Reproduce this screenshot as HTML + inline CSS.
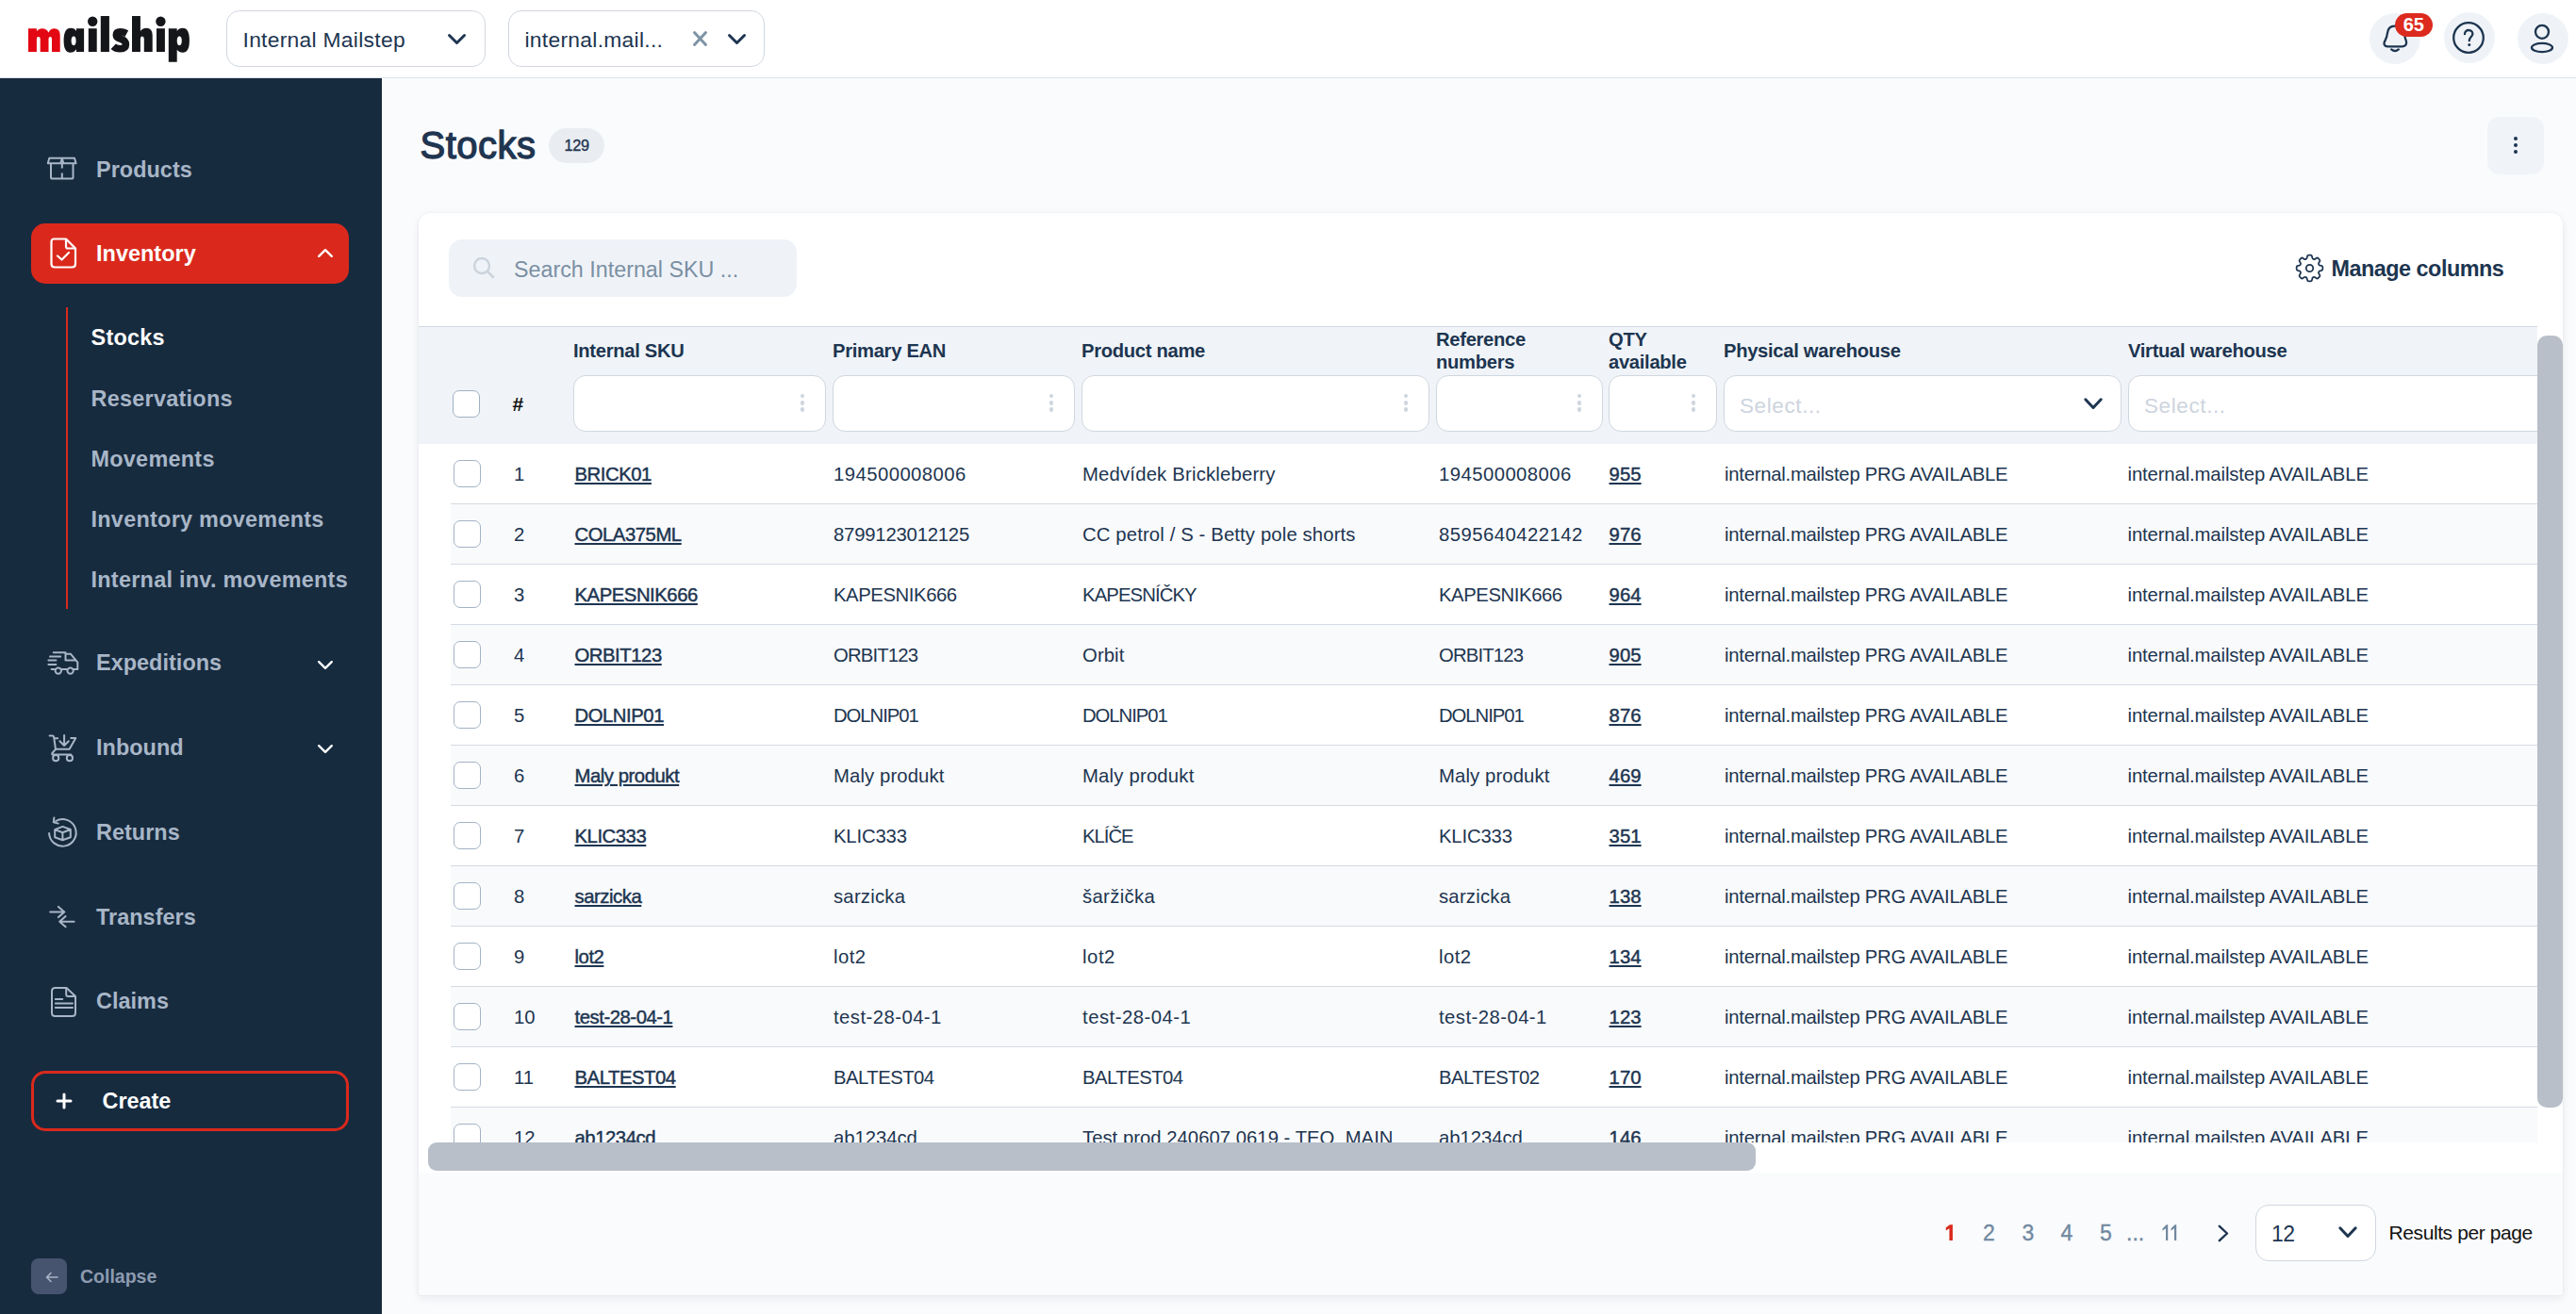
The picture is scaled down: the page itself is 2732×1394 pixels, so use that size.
<!DOCTYPE html>
<html><head><meta charset="utf-8"><style>
*{box-sizing:border-box;margin:0;padding:0}
html,body{width:2732px;height:1394px;overflow:hidden;background:#fafbfd;font-family:"Liberation Sans", sans-serif}
.t{position:absolute;white-space:nowrap;line-height:1;font-family:"Liberation Sans", sans-serif}
.a{position:absolute}
svg{position:absolute;overflow:visible}
</style></head><body>
<div class="a" style="left:0;top:0;width:2732px;height:83px;background:#fff"></div>
<div class="a" style="left:0;top:82px;width:2732px;height:1px;background:#dde3ea"></div>
<svg style="left:0;top:0" width="220" height="80" viewBox="0 0 220 80"><path fill="#e30613" d="M30 54.9 V30.2 H38.9 V33.2 Q41 30.2 44.8 30.2 Q49.2 30.2 51.4 34.4 Q53.8 30.2 57.4 30.2 Q63.7 30.2 63.7 37.2 V54.9 H55 V41.2 Q55 38.9 53.3 38.9 Q51.5 38.9 51.5 41.2 V54.9 H42.7 V41.2 Q42.7 38.9 40.8 38.9 Q38.9 38.9 38.9 41.2 V54.9 Z"/><path fill="#151619" fill-rule="evenodd" d="M81 30.2 H89.1 V55 H81 V52.3 Q78.5 55.8 74.5 55.8 Q67.6 55.8 67.6 43 Q67.6 29.8 75 29.8 Q79 29.8 81 33 Z M78.2 38.4 Q75.6 38.4 75.6 43.3 Q75.6 48.2 78.2 48.2 Q80.6 48.2 80.6 43.3 Q80.6 38.4 78.2 38.4 Z"/><rect x="93.8" y="30.2" width="8.9" height="24.8" fill="#151619"/><circle cx="98.2" cy="22.8" r="5.2" fill="#151619"/><rect x="106.8" y="17" width="9.1" height="38" fill="#151619"/><path fill="none" stroke="#151619" stroke-width="7.6" d="M134.3 35.6 Q131 33.8 127.6 33.8 Q123.3 33.8 123.3 37.2 Q123.3 39.9 128.2 41.3 Q133.4 42.8 133.4 47.1 Q133.4 51.7 127.4 51.7 Q122.8 51.7 120.2 49.2"/><path fill="#151619" d="M140 17 H148.9 V33 Q151.5 29.8 155.2 29.8 Q161.7 29.8 161.7 37.5 V55 H152.8 V41.2 Q152.8 38.6 150.8 38.6 Q148.9 38.6 148.9 41.2 V55 H140 Z"/><rect x="166" y="30.2" width="8.9" height="24.8" fill="#151619"/><circle cx="170.4" cy="22.8" r="5.2" fill="#151619"/><path fill="#151619" fill-rule="evenodd" d="M178.8 30.2 H187.7 V33 Q190 29.8 193.8 29.8 Q200.9 29.8 200.9 43 Q200.9 55.8 193.8 55.8 Q190 55.8 187.7 52.8 V65.7 H178.8 Z M190.2 38.4 Q187.7 38.4 187.7 43.3 Q187.7 48.2 190.2 48.2 Q192.8 48.2 192.8 43.3 Q192.8 38.4 190.2 38.4 Z"/></svg>
<div class="a" style="left:240px;top:11px;width:275px;height:60px;border:1px solid #d1d7df;border-radius:14px;background:#fff"></div>
<div class="t" style="left:257.5px;top:30.7px;font-size:22.8px;color:#1d3550;font-weight:400;letter-spacing:0.3px;">Internal Mailstep</div>
<svg style="left:475px;top:36px" width="19" height="11" viewBox="0 0 19 11"><path d="M1.5 1.5 L9.5 9.5 L17.5 1.5" fill="none" stroke="#1d3550" stroke-width="3" stroke-linecap="round" stroke-linejoin="round"/></svg>
<div class="a" style="left:539px;top:11px;width:272px;height:60px;border:1px solid #d1d7df;border-radius:14px;background:#fff"></div>
<div class="t" style="left:556.5px;top:30.7px;font-size:22.8px;color:#1d3550;font-weight:400;letter-spacing:0.3px;">internal.mail...</div>
<svg style="left:735px;top:33px" width="15" height="16" viewBox="0 0 15 16"><path d="M1.5 1.5 L13.5 14.5 M13.5 1.5 L1.5 14.5" fill="none" stroke="#7f93a6" stroke-width="3" stroke-linecap="round"/></svg>
<svg style="left:771.5px;top:36px" width="19" height="11" viewBox="0 0 19 11"><path d="M1.5 1.5 L9.5 9.5 L17.5 1.5" fill="none" stroke="#1d3550" stroke-width="3" stroke-linecap="round" stroke-linejoin="round"/></svg>
<div class="a" style="left:2513px;top:14px;width:54px;height:54px;border-radius:50%;background:#eff3f7"></div>
<div class="a" style="left:2591.5px;top:13px;width:54px;height:54px;border-radius:50%;background:#eff3f7"></div>
<div class="a" style="left:2670px;top:14px;width:54px;height:54px;border-radius:50%;background:#eff3f7"></div>
<svg style="left:2526px;top:25px" width="30" height="34" viewBox="0 0 30 34"><path d="M13.5 2.6 C8.6 2.6 6.6 6 6.1 9.6 C5.6 13.2 5 15.4 3.4 18.4 C1.8 21.4 2.2 24.2 6.4 24.3 H21.8 C25.6 24.2 26.4 21.8 26 19.2 C25.6 16.8 24.4 15.4 24.2 12 C23.8 6.2 19.6 2.6 13.5 2.6 Z" fill="none" stroke="#1d3550" stroke-width="2.3" stroke-linejoin="round"/><path d="M10.2 27.4 Q14 30.6 17.8 27.4" fill="none" stroke="#1d3550" stroke-width="2.3" stroke-linecap="round"/></svg>
<div class="a" style="left:2540px;top:14px;width:40px;height:25px;border-radius:13px;background:#dc2a1e"></div>
<div class="t" style="left:2548.8px;top:16.0px;font-size:20px;color:#fff;font-weight:700;letter-spacing:-0.2px;">65</div>
<svg style="left:2601px;top:23px" width="34" height="34" viewBox="0 0 34 34"><circle cx="17" cy="17" r="15.8" fill="none" stroke="#1d3550" stroke-width="2.3"/><path d="M13 13.2 C13 10.5 15 9 17.2 9 C19.6 9 21.4 10.8 21.4 13 C21.4 15.8 17.8 16.5 17.8 20.2" fill="none" stroke="#1d3550" stroke-width="2.3" stroke-linecap="round"/><circle cx="17.8" cy="24.6" r="1.5" fill="#1d3550"/></svg>
<svg style="left:2681px;top:24px" width="30" height="34" viewBox="0 0 30 34"><circle cx="15" cy="9.8" r="7" fill="none" stroke="#1d3550" stroke-width="2.3"/><ellipse cx="15" cy="26.5" rx="11" ry="4.6" fill="none" stroke="#1d3550" stroke-width="2.3"/></svg>
<div class="a" style="left:0;top:83px;width:405px;height:1311px;background:#172b3f"></div>
<div class="a" style="left:33px;top:237px;width:337px;height:64px;border-radius:15px;background:#da291c"></div>
<div class="t" style="left:102.0px;top:168.6px;font-size:23.4px;color:#a8b6c7;font-weight:700;letter-spacing:0.05px;">Products</div>
<div class="t" style="left:102.0px;top:257.6px;font-size:23.4px;color:#fff;font-weight:700;letter-spacing:0.05px;">Inventory</div>
<div class="t" style="left:102.0px;top:692.2px;font-size:23.4px;color:#a8b6c7;font-weight:700;letter-spacing:0.05px;">Expeditions</div>
<div class="t" style="left:102.0px;top:782.0px;font-size:23.4px;color:#a8b6c7;font-weight:700;letter-spacing:0.05px;">Inbound</div>
<div class="t" style="left:102.0px;top:872.0px;font-size:23.4px;color:#a8b6c7;font-weight:700;letter-spacing:0.05px;">Returns</div>
<div class="t" style="left:102.0px;top:961.6px;font-size:23.4px;color:#a8b6c7;font-weight:700;letter-spacing:0.05px;">Transfers</div>
<div class="t" style="left:102.0px;top:1051.1px;font-size:23.4px;color:#a8b6c7;font-weight:700;letter-spacing:0.05px;">Claims</div>
<svg style="left:337px;top:263.5px" width="16" height="9" viewBox="0 0 16 9"><path d="M1.2 7.8 L8 1.2 L14.8 7.8" fill="none" stroke="#fff" stroke-width="2.4" stroke-linecap="round" stroke-linejoin="round"/></svg>
<svg style="left:337px;top:700.5px" width="16" height="9" viewBox="0 0 16 9"><path d="M1.2 1.2 L8 7.8 L14.8 1.2" fill="none" stroke="#fff" stroke-width="2.4" stroke-linecap="round" stroke-linejoin="round"/></svg>
<svg style="left:337px;top:790px" width="16" height="9" viewBox="0 0 16 9"><path d="M1.2 1.2 L8 7.8 L14.8 1.2" fill="none" stroke="#fff" stroke-width="2.4" stroke-linecap="round" stroke-linejoin="round"/></svg>
<div class="a" style="left:70px;top:326px;width:2px;height:320px;background:#da291c"></div>
<div class="t" style="left:96.5px;top:347.4px;font-size:23.4px;color:#fff;font-weight:700;letter-spacing:0.28px;">Stocks</div>
<div class="t" style="left:96.5px;top:411.9px;font-size:23.4px;color:#a8b6c7;font-weight:700;letter-spacing:0.28px;">Reservations</div>
<div class="t" style="left:96.5px;top:475.7px;font-size:23.4px;color:#a8b6c7;font-weight:700;letter-spacing:0.28px;">Movements</div>
<div class="t" style="left:96.5px;top:539.7px;font-size:23.4px;color:#a8b6c7;font-weight:700;letter-spacing:0.28px;">Inventory movements</div>
<div class="t" style="left:96.5px;top:603.7px;font-size:23.4px;color:#a8b6c7;font-weight:700;letter-spacing:0.28px;">Internal inv. movements</div>
<svg style="left:50px;top:166px" width="32" height="26" viewBox="0 0 32 26"><path d="M2.3 1.7 H29 L30.6 7.2 H0.8 Z" fill="none" stroke="#a8b6c7" stroke-width="2" stroke-linejoin="round"/><path d="M14.3 7.2 L15.8 1.9 L17.3 7.2" fill="none" stroke="#a8b6c7" stroke-width="2" stroke-linejoin="round"/><path d="M4 7.2 V22 Q4 23.6 5.6 23.6 H25.9 Q27.5 23.6 27.5 22 V7.2" fill="none" stroke="#a8b6c7" stroke-width="2"/><path d="M15.8 7.2 V12.4 M15.8 17.5 V23.6" stroke="#a8b6c7" stroke-width="2"/></svg>
<svg style="left:53px;top:252px" width="29" height="33" viewBox="0 0 29 33"><path d="M4 1.5 H17 L27 11.5 V28 Q27 31.5 23.5 31.5 H5 Q1.5 31.5 1.5 28 V5 Q1.5 1.5 4 1.5 Z" fill="none" stroke="#fff" stroke-width="2.2" stroke-linejoin="round"/><path d="M17 1.5 V9.5 Q17 11.5 19 11.5 H27" fill="none" stroke="#fff" stroke-width="2.2"/><path d="M8 19.5 L12.5 23.5 L20 16" fill="none" stroke="#fff" stroke-width="2.2" stroke-linecap="round" stroke-linejoin="round"/></svg>
<svg style="left:45px;top:685px" width="45" height="35" viewBox="0 0 45 35"><path d="M11.7 7.3 H24.5 V15.5 H35.6 M24.5 8.8 H30 L37.3 17.6 V25 H33 M20.6 25 H26 M9.6 25 H13" fill="none" stroke="#a8b6c7" stroke-width="2" stroke-linecap="round" stroke-linejoin="round"/><path d="M8 11.5 H19.2 M6.4 15.5 H14.4 M6.4 20 H14.4" stroke="#a8b6c7" stroke-width="2" stroke-linecap="round"/><circle cx="16.8" cy="26.6" r="3.2" fill="none" stroke="#a8b6c7" stroke-width="2"/><circle cx="29.6" cy="26.6" r="3.2" fill="none" stroke="#a8b6c7" stroke-width="2"/></svg>
<svg style="left:45px;top:772px" width="45" height="40" viewBox="0 0 45 40"><path d="M7.6 8.4 H10.6 Q11.8 8.4 12.1 9.8 L14 22.8 H28.6 L35.3 11 H30.2 M12.5 11.3 H16.2" fill="none" stroke="#a8b6c7" stroke-width="2" stroke-linecap="round" stroke-linejoin="round"/><path d="M14 22.8 L10.4 27 Q9.6 28.6 11.4 28.6 H30.2" fill="none" stroke="#a8b6c7" stroke-width="2" stroke-linecap="round" stroke-linejoin="round"/><path d="M23.1 7.9 V19 M18.4 14.2 L23.1 19 L27.8 14.2" fill="none" stroke="#a8b6c7" stroke-width="2" stroke-linecap="round" stroke-linejoin="round"/><circle cx="14.2" cy="32.2" r="3.1" fill="none" stroke="#a8b6c7" stroke-width="2"/><circle cx="28.9" cy="32.2" r="3.1" fill="none" stroke="#a8b6c7" stroke-width="2"/></svg>
<svg style="left:45px;top:860px" width="45" height="45" viewBox="0 0 45 45"><path d="M7.1 24 A14.3 14.3 0 1 0 14.2 11.0" fill="none" stroke="#a8b6c7" stroke-width="2" stroke-linecap="round"/><path d="M12.4 7.4 L11.8 12.3 L16.8 13.6" fill="none" stroke="#a8b6c7" stroke-width="2" stroke-linecap="round" stroke-linejoin="round"/><path d="M21.4 16.9 L29.8 20 V28.3 L21.4 31.3 L13.2 28.2 V20.1 Z M13.2 20.1 L21.4 23.2 L29.8 20 M21.4 23.2 V31.3" fill="none" stroke="#a8b6c7" stroke-width="2" stroke-linejoin="round"/></svg>
<svg style="left:45px;top:950px" width="45" height="45" viewBox="0 0 45 45"><path d="M8.2 17.5 H23.3 M16.9 11.9 L23.3 17.5 L16.9 23.1 M33.6 27.7 H18.2 M24.6 22.1 L18.2 27.7 L24.6 33.3" fill="none" stroke="#a8b6c7" stroke-width="2" stroke-linecap="round" stroke-linejoin="round"/></svg>
<svg style="left:53.5px;top:1046.5px" width="28" height="32" viewBox="0 0 28 32"><path d="M4.5 1 H16.5 L26 10 V27.5 Q26 31 22.5 31 H4.5 Q1 31 1 27.5 V4.5 Q1 1 4.5 1 Z" fill="none" stroke="#a8b6c7" stroke-width="2" stroke-linejoin="round"/><path d="M16.2 1 V8 Q16.2 10 18.2 10 H26" fill="none" stroke="#a8b6c7" stroke-width="2"/><path d="M4.8 13 H12.2 M4.8 17.5 H23 M4.8 21.9 H23" stroke="#a8b6c7" stroke-width="2" stroke-linecap="round"/></svg>
<div class="a" style="left:33px;top:1136px;width:337px;height:64px;border:3px solid #da291c;border-radius:15px"></div>
<svg style="left:60px;top:1160px" width="16" height="16" viewBox="0 0 16 16"><path d="M8 1 V15 M1 8 H15" stroke="#fff" stroke-width="3" stroke-linecap="round"/></svg>
<div class="t" style="left:108.5px;top:1157.2px;font-size:23.4px;color:#fff;font-weight:700;letter-spacing:0px;">Create</div>
<div class="a" style="left:33px;top:1335px;width:38px;height:38px;border-radius:8px;background:#465470"></div>
<svg style="left:47.5px;top:1348.5px" width="14" height="12" viewBox="0 0 14 12"><path d="M13 6 H1.5 M6 1.5 L1.5 6 L6 10.5" fill="none" stroke="#aab5c5" stroke-width="1.6" stroke-linecap="round" stroke-linejoin="round"/></svg>
<div class="t" style="left:85.0px;top:1344.5px;font-size:19.5px;color:#8d9bb0;font-weight:700;letter-spacing:0px;">Collapse</div>
<div class="t" style="left:445.5px;top:133.9px;font-size:40px;color:#1f3550;font-weight:400;letter-spacing:0.5px;-webkit-text-stroke:1.3px currentColor;">Stocks</div>
<div class="a" style="left:582px;top:136px;width:59px;height:37px;border-radius:19px;background:#e9edf2"></div>
<div class="t" style="left:598.5px;top:146.1px;font-size:16.3px;color:#1f3550;font-weight:400;letter-spacing:-0.3px;-webkit-text-stroke:0.35px currentColor;">129</div>
<div class="a" style="left:2638px;top:124px;width:60px;height:61px;border-radius:13px;background:#f0f3f8"></div>
<div class="a" style="left:2665.8px;top:145.10000000000002px;width:4.4px;height:4.4px;border-radius:50%;background:#1d3550"></div>
<div class="a" style="left:2665.8px;top:152.0px;width:4.4px;height:4.4px;border-radius:50%;background:#1d3550"></div>
<div class="a" style="left:2665.8px;top:159.0px;width:4.4px;height:4.4px;border-radius:50%;background:#1d3550"></div>
<div class="a" style="left:444px;top:226px;width:2274px;height:1148px;border-radius:13px 13px 2px 2px;background:#fafbfd;box-shadow:0 3px 10px rgba(15,23,42,0.08),0 0 3px rgba(15,23,42,0.05)"></div>
<div class="a" style="left:444px;top:226px;width:2274px;height:1018px;border-radius:13px 13px 0 0;background:#fff"></div>
<div class="a" style="left:476px;top:254px;width:369px;height:61px;border-radius:14px;background:#eff3f8"></div>
<svg style="left:501px;top:272px" width="24" height="24" viewBox="0 0 24 24"><circle cx="10" cy="10" r="8" fill="none" stroke="#cbd3dc" stroke-width="2.4"/><path d="M16 16 L22 22" stroke="#cbd3dc" stroke-width="2.6" stroke-linecap="round"/></svg>
<div class="t" style="left:545.0px;top:274.5px;font-size:23.3px;color:#7b8fa3;font-weight:400;letter-spacing:0px;">Search Internal SKU ...</div>
<svg style="left:2430.5px;top:265.5px" width="37" height="37" viewBox="0 0 24 24"><path fill="none" stroke="#1d3550" stroke-width="1.15" stroke-linejoin="round" d="M10.343 3.94c.09-.542.56-.94 1.11-.94h1.093c.55 0 1.02.398 1.11.94l.149.894c.07.424.384.764.78.93.398.164.855.142 1.205-.108l.737-.527a1.125 1.125 0 0 1 1.45.12l.773.774c.39.389.44 1.002.12 1.45l-.527.737c-.25.35-.272.806-.107 1.204.165.397.505.71.93.78l.893.15c.543.09.94.559.94 1.109v1.094c0 .55-.397 1.02-.94 1.11l-.894.149c-.424.07-.764.383-.929.78-.165.398-.143.854.107 1.204l.527.738c.32.447.269 1.06-.12 1.45l-.774.773a1.125 1.125 0 0 1-1.449.12l-.738-.527c-.35-.25-.806-.272-1.203-.107-.398.165-.71.505-.781.929l-.149.894c-.09.542-.56.94-1.11.94h-1.094c-.55 0-1.019-.398-1.11-.94l-.148-.894c-.071-.424-.384-.764-.781-.93-.398-.164-.854-.142-1.204.108l-.738.527c-.447.32-1.06.269-1.45-.12l-.773-.774a1.125 1.125 0 0 1-.12-1.45l.527-.737c.25-.35.272-.806.108-1.204-.165-.397-.506-.71-.93-.78l-.894-.15c-.542-.09-.94-.56-.94-1.109v-1.094c0-.55.398-1.02.94-1.11l.894-.149c.424-.07.765-.383.93-.78.165-.398.143-.854-.108-1.204l-.526-.738a1.125 1.125 0 0 1 .12-1.45l.773-.773a1.125 1.125 0 0 1 1.45-.12l.737.527c.35.25.807.272 1.204.107.397-.165.71-.505.78-.929l.15-.894Z"/><circle cx="12" cy="12" r="2.4" fill="none" stroke="#1d3550" stroke-width="1.15"/></svg>
<div class="t" style="left:2472.5px;top:274.2px;font-size:23.4px;color:#1d3550;font-weight:700;letter-spacing:-0.5px;">Manage columns</div>
<div class="a" style="left:444px;top:346px;width:2247px;height:125px;background:#f0f4f8;border-top:1px solid #d3dae3"></div>
<div class="a" style="left:0;top:0;width:2691px;height:480px;overflow:hidden">
<div class="a" style="left:480px;top:414px;width:29px;height:29px;border:1.5px solid #9fb0c3;border-radius:7px;background:#fff"></div>
<div class="t" style="left:543.5px;top:417.7px;font-size:21px;color:#111;font-weight:700;letter-spacing:0px;">#</div>
<div class="t" style="left:608.0px;top:361.9px;font-size:20.2px;color:#1d3550;font-weight:700;letter-spacing:-0.3px;">Internal SKU</div>
<div class="a" style="left:608px;top:398px;width:268px;height:60px;border:1px solid #d1d7df;border-radius:13px;background:#fff"></div>
<div class="a" style="left:848.7px;top:417.7px;width:4.6px;height:4.6px;border-radius:50%;background:#cdd5df"></div>
<div class="a" style="left:848.7px;top:425.0px;width:4.6px;height:4.6px;border-radius:50%;background:#cdd5df"></div>
<div class="a" style="left:848.7px;top:432.3px;width:4.6px;height:4.6px;border-radius:50%;background:#cdd5df"></div>
<div class="t" style="left:883.0px;top:361.9px;font-size:20.2px;color:#1d3550;font-weight:700;letter-spacing:-0.3px;">Primary EAN</div>
<div class="a" style="left:883px;top:398px;width:257px;height:60px;border:1px solid #d1d7df;border-radius:13px;background:#fff"></div>
<div class="a" style="left:1112.7px;top:417.7px;width:4.6px;height:4.6px;border-radius:50%;background:#cdd5df"></div>
<div class="a" style="left:1112.7px;top:425.0px;width:4.6px;height:4.6px;border-radius:50%;background:#cdd5df"></div>
<div class="a" style="left:1112.7px;top:432.3px;width:4.6px;height:4.6px;border-radius:50%;background:#cdd5df"></div>
<div class="t" style="left:1147.0px;top:361.9px;font-size:20.2px;color:#1d3550;font-weight:700;letter-spacing:-0.3px;">Product name</div>
<div class="a" style="left:1147px;top:398px;width:369px;height:60px;border:1px solid #d1d7df;border-radius:13px;background:#fff"></div>
<div class="a" style="left:1488.7px;top:417.7px;width:4.6px;height:4.6px;border-radius:50%;background:#cdd5df"></div>
<div class="a" style="left:1488.7px;top:425.0px;width:4.6px;height:4.6px;border-radius:50%;background:#cdd5df"></div>
<div class="a" style="left:1488.7px;top:432.3px;width:4.6px;height:4.6px;border-radius:50%;background:#cdd5df"></div>
<div class="t" style="left:1523.0px;top:350.2px;font-size:20.2px;color:#1d3550;font-weight:700;letter-spacing:-0.3px;">Reference</div>
<div class="t" style="left:1523.0px;top:373.5px;font-size:20.2px;color:#1d3550;font-weight:700;letter-spacing:-0.3px;">numbers</div>
<div class="a" style="left:1523px;top:398px;width:177px;height:60px;border:1px solid #d1d7df;border-radius:13px;background:#fff"></div>
<div class="a" style="left:1672.7px;top:417.7px;width:4.6px;height:4.6px;border-radius:50%;background:#cdd5df"></div>
<div class="a" style="left:1672.7px;top:425.0px;width:4.6px;height:4.6px;border-radius:50%;background:#cdd5df"></div>
<div class="a" style="left:1672.7px;top:432.3px;width:4.6px;height:4.6px;border-radius:50%;background:#cdd5df"></div>
<div class="t" style="left:1706.0px;top:350.2px;font-size:20.2px;color:#1d3550;font-weight:700;letter-spacing:-0.3px;">QTY</div>
<div class="t" style="left:1706.0px;top:373.5px;font-size:20.2px;color:#1d3550;font-weight:700;letter-spacing:-0.3px;">available</div>
<div class="a" style="left:1706px;top:398px;width:115px;height:60px;border:1px solid #d1d7df;border-radius:13px;background:#fff"></div>
<div class="a" style="left:1793.7px;top:417.7px;width:4.6px;height:4.6px;border-radius:50%;background:#cdd5df"></div>
<div class="a" style="left:1793.7px;top:425.0px;width:4.6px;height:4.6px;border-radius:50%;background:#cdd5df"></div>
<div class="a" style="left:1793.7px;top:432.3px;width:4.6px;height:4.6px;border-radius:50%;background:#cdd5df"></div>
<div class="t" style="left:1828.0px;top:361.9px;font-size:20.2px;color:#1d3550;font-weight:700;letter-spacing:-0.3px;">Physical warehouse</div>
<div class="a" style="left:1828px;top:398px;width:422px;height:60px;border:1px solid #d1d7df;border-radius:13px;background:#fff"></div>
<div class="t" style="left:1845.0px;top:419.5px;font-size:22.5px;color:#cdd4de;font-weight:400;letter-spacing:0.6px;">Select...</div>
<svg style="left:2210px;top:422px" width="20" height="13" viewBox="0 0 20 13"><path d="M1.8 1.8 L10 10.5 L18.2 1.8" fill="none" stroke="#1d3550" stroke-width="3" stroke-linecap="round" stroke-linejoin="round"/></svg>
<div class="t" style="left:2257.0px;top:361.9px;font-size:20.2px;color:#1d3550;font-weight:700;letter-spacing:-0.3px;">Virtual warehouse</div>
<div class="a" style="left:2257px;top:398px;width:503px;height:60px;border:1px solid #d1d7df;border-radius:13px;background:#fff"></div>
<div class="t" style="left:2274.0px;top:419.5px;font-size:22.5px;color:#cdd4de;font-weight:400;letter-spacing:0.6px;">Select...</div>
</div>
<div class="a" style="left:444px;top:471px;width:2247px;height:741px;overflow:hidden">
<div class="a" style="left:34px;top:0px;width:2213px;height:64px;background:#fff;border-bottom:1px solid #d5dbe3"></div>
<div class="a" style="left:37px;top:17px;width:29px;height:29px;border:1.5px solid #a3b3c5;border-radius:7px;background:#fff"></div>
<div class="t" style="left:101.0px;top:22.3px;font-size:20.3px;color:#1d3550;font-weight:400;letter-spacing:0px;">1</div>
<div class="t" style="left:165.5px;top:22.3px;font-size:20.3px;color:#1d3550;font-weight:400;letter-spacing:-0.45px;-webkit-text-stroke:0.45px currentColor;text-decoration:underline;text-decoration-thickness:1.5px;text-underline-offset:2px;">BRICK01</div>
<div class="t" style="left:440.0px;top:22.3px;font-size:20.3px;color:#1d3550;font-weight:400;letter-spacing:0.45px;">194500008006</div>
<div class="t" style="left:704.0px;top:22.3px;font-size:20.3px;color:#1d3550;font-weight:400;letter-spacing:0.19px;">Medvídek Brickleberry</div>
<div class="t" style="left:1082.0px;top:22.3px;font-size:20.3px;color:#1d3550;font-weight:400;letter-spacing:0.45px;">194500008006</div>
<div class="t" style="left:1262.5px;top:22.3px;font-size:20.3px;color:#1d3550;font-weight:400;letter-spacing:0.1px;-webkit-text-stroke:0.45px currentColor;text-decoration:underline;text-decoration-thickness:1.5px;text-underline-offset:2px;">955</div>
<div class="t" style="left:1385.0px;top:22.3px;font-size:20.3px;color:#1d3550;font-weight:400;letter-spacing:-0.25px;">internal.mailstep PRG AVAILABLE</div>
<div class="t" style="left:1812.5px;top:22.3px;font-size:20.3px;color:#1d3550;font-weight:400;letter-spacing:-0.12px;">internal.mailstep AVAILABLE</div>
<div class="a" style="left:34px;top:64px;width:2213px;height:64px;background:#f9fafc;border-bottom:1px solid #d5dbe3"></div>
<div class="a" style="left:37px;top:81px;width:29px;height:29px;border:1.5px solid #a3b3c5;border-radius:7px;background:#fff"></div>
<div class="t" style="left:101.0px;top:86.3px;font-size:20.3px;color:#1d3550;font-weight:400;letter-spacing:0px;">2</div>
<div class="t" style="left:165.5px;top:86.3px;font-size:20.3px;color:#1d3550;font-weight:400;letter-spacing:-0.45px;-webkit-text-stroke:0.45px currentColor;text-decoration:underline;text-decoration-thickness:1.5px;text-underline-offset:2px;">COLA375ML</div>
<div class="t" style="left:440.0px;top:86.3px;font-size:20.3px;color:#1d3550;font-weight:400;letter-spacing:-0.2px;">8799123012125</div>
<div class="t" style="left:704.0px;top:86.3px;font-size:20.3px;color:#1d3550;font-weight:400;letter-spacing:0.134px;">CC petrol / S - Betty pole shorts</div>
<div class="t" style="left:1082.0px;top:86.3px;font-size:20.3px;color:#1d3550;font-weight:400;letter-spacing:0.475px;">8595640422142</div>
<div class="t" style="left:1262.5px;top:86.3px;font-size:20.3px;color:#1d3550;font-weight:400;letter-spacing:0.1px;-webkit-text-stroke:0.45px currentColor;text-decoration:underline;text-decoration-thickness:1.5px;text-underline-offset:2px;">976</div>
<div class="t" style="left:1385.0px;top:86.3px;font-size:20.3px;color:#1d3550;font-weight:400;letter-spacing:-0.25px;">internal.mailstep PRG AVAILABLE</div>
<div class="t" style="left:1812.5px;top:86.3px;font-size:20.3px;color:#1d3550;font-weight:400;letter-spacing:-0.12px;">internal.mailstep AVAILABLE</div>
<div class="a" style="left:34px;top:128px;width:2213px;height:64px;background:#fff;border-bottom:1px solid #d5dbe3"></div>
<div class="a" style="left:37px;top:145px;width:29px;height:29px;border:1.5px solid #a3b3c5;border-radius:7px;background:#fff"></div>
<div class="t" style="left:101.0px;top:150.3px;font-size:20.3px;color:#1d3550;font-weight:400;letter-spacing:0px;">3</div>
<div class="t" style="left:165.5px;top:150.3px;font-size:20.3px;color:#1d3550;font-weight:400;letter-spacing:-0.45px;-webkit-text-stroke:0.45px currentColor;text-decoration:underline;text-decoration-thickness:1.5px;text-underline-offset:2px;">KAPESNIK666</div>
<div class="t" style="left:440.0px;top:150.3px;font-size:20.3px;color:#1d3550;font-weight:400;letter-spacing:-0.415px;">KAPESNIK666</div>
<div class="t" style="left:704.0px;top:150.3px;font-size:20.3px;color:#1d3550;font-weight:400;letter-spacing:-0.889px;">KAPESNÍČKY</div>
<div class="t" style="left:1082.0px;top:150.3px;font-size:20.3px;color:#1d3550;font-weight:400;letter-spacing:-0.415px;">KAPESNIK666</div>
<div class="t" style="left:1262.5px;top:150.3px;font-size:20.3px;color:#1d3550;font-weight:400;letter-spacing:0.1px;-webkit-text-stroke:0.45px currentColor;text-decoration:underline;text-decoration-thickness:1.5px;text-underline-offset:2px;">964</div>
<div class="t" style="left:1385.0px;top:150.3px;font-size:20.3px;color:#1d3550;font-weight:400;letter-spacing:-0.25px;">internal.mailstep PRG AVAILABLE</div>
<div class="t" style="left:1812.5px;top:150.3px;font-size:20.3px;color:#1d3550;font-weight:400;letter-spacing:-0.12px;">internal.mailstep AVAILABLE</div>
<div class="a" style="left:34px;top:192px;width:2213px;height:64px;background:#f9fafc;border-bottom:1px solid #d5dbe3"></div>
<div class="a" style="left:37px;top:209px;width:29px;height:29px;border:1.5px solid #a3b3c5;border-radius:7px;background:#fff"></div>
<div class="t" style="left:101.0px;top:214.3px;font-size:20.3px;color:#1d3550;font-weight:400;letter-spacing:0px;">4</div>
<div class="t" style="left:165.5px;top:214.3px;font-size:20.3px;color:#1d3550;font-weight:400;letter-spacing:-0.45px;-webkit-text-stroke:0.45px currentColor;text-decoration:underline;text-decoration-thickness:1.5px;text-underline-offset:2px;">ORBIT123</div>
<div class="t" style="left:440.0px;top:214.3px;font-size:20.3px;color:#1d3550;font-weight:400;letter-spacing:-0.829px;">ORBIT123</div>
<div class="t" style="left:704.0px;top:214.3px;font-size:20.3px;color:#1d3550;font-weight:400;letter-spacing:0.1px;">Orbit</div>
<div class="t" style="left:1082.0px;top:214.3px;font-size:20.3px;color:#1d3550;font-weight:400;letter-spacing:-0.829px;">ORBIT123</div>
<div class="t" style="left:1262.5px;top:214.3px;font-size:20.3px;color:#1d3550;font-weight:400;letter-spacing:0.1px;-webkit-text-stroke:0.45px currentColor;text-decoration:underline;text-decoration-thickness:1.5px;text-underline-offset:2px;">905</div>
<div class="t" style="left:1385.0px;top:214.3px;font-size:20.3px;color:#1d3550;font-weight:400;letter-spacing:-0.25px;">internal.mailstep PRG AVAILABLE</div>
<div class="t" style="left:1812.5px;top:214.3px;font-size:20.3px;color:#1d3550;font-weight:400;letter-spacing:-0.12px;">internal.mailstep AVAILABLE</div>
<div class="a" style="left:34px;top:256px;width:2213px;height:64px;background:#fff;border-bottom:1px solid #d5dbe3"></div>
<div class="a" style="left:37px;top:273px;width:29px;height:29px;border:1.5px solid #a3b3c5;border-radius:7px;background:#fff"></div>
<div class="t" style="left:101.0px;top:278.3px;font-size:20.3px;color:#1d3550;font-weight:400;letter-spacing:0px;">5</div>
<div class="t" style="left:165.5px;top:278.3px;font-size:20.3px;color:#1d3550;font-weight:400;letter-spacing:-0.45px;-webkit-text-stroke:0.45px currentColor;text-decoration:underline;text-decoration-thickness:1.5px;text-underline-offset:2px;">DOLNIP01</div>
<div class="t" style="left:440.0px;top:278.3px;font-size:20.3px;color:#1d3550;font-weight:400;letter-spacing:-1.05px;">DOLNIP01</div>
<div class="t" style="left:704.0px;top:278.3px;font-size:20.3px;color:#1d3550;font-weight:400;letter-spacing:-1.05px;">DOLNIP01</div>
<div class="t" style="left:1082.0px;top:278.3px;font-size:20.3px;color:#1d3550;font-weight:400;letter-spacing:-1.05px;">DOLNIP01</div>
<div class="t" style="left:1262.5px;top:278.3px;font-size:20.3px;color:#1d3550;font-weight:400;letter-spacing:0.1px;-webkit-text-stroke:0.45px currentColor;text-decoration:underline;text-decoration-thickness:1.5px;text-underline-offset:2px;">876</div>
<div class="t" style="left:1385.0px;top:278.3px;font-size:20.3px;color:#1d3550;font-weight:400;letter-spacing:-0.25px;">internal.mailstep PRG AVAILABLE</div>
<div class="t" style="left:1812.5px;top:278.3px;font-size:20.3px;color:#1d3550;font-weight:400;letter-spacing:-0.12px;">internal.mailstep AVAILABLE</div>
<div class="a" style="left:34px;top:320px;width:2213px;height:64px;background:#f9fafc;border-bottom:1px solid #d5dbe3"></div>
<div class="a" style="left:37px;top:337px;width:29px;height:29px;border:1.5px solid #a3b3c5;border-radius:7px;background:#fff"></div>
<div class="t" style="left:101.0px;top:342.3px;font-size:20.3px;color:#1d3550;font-weight:400;letter-spacing:0px;">6</div>
<div class="t" style="left:165.5px;top:342.3px;font-size:20.3px;color:#1d3550;font-weight:400;letter-spacing:-0.45px;-webkit-text-stroke:0.45px currentColor;text-decoration:underline;text-decoration-thickness:1.5px;text-underline-offset:2px;">Maly produkt</div>
<div class="t" style="left:440.0px;top:342.3px;font-size:20.3px;color:#1d3550;font-weight:400;letter-spacing:0.109px;">Maly produkt</div>
<div class="t" style="left:704.0px;top:342.3px;font-size:20.3px;color:#1d3550;font-weight:400;letter-spacing:0.2px;">Maly produkt</div>
<div class="t" style="left:1082.0px;top:342.3px;font-size:20.3px;color:#1d3550;font-weight:400;letter-spacing:0.109px;">Maly produkt</div>
<div class="t" style="left:1262.5px;top:342.3px;font-size:20.3px;color:#1d3550;font-weight:400;letter-spacing:0.1px;-webkit-text-stroke:0.45px currentColor;text-decoration:underline;text-decoration-thickness:1.5px;text-underline-offset:2px;">469</div>
<div class="t" style="left:1385.0px;top:342.3px;font-size:20.3px;color:#1d3550;font-weight:400;letter-spacing:-0.25px;">internal.mailstep PRG AVAILABLE</div>
<div class="t" style="left:1812.5px;top:342.3px;font-size:20.3px;color:#1d3550;font-weight:400;letter-spacing:-0.12px;">internal.mailstep AVAILABLE</div>
<div class="a" style="left:34px;top:384px;width:2213px;height:64px;background:#fff;border-bottom:1px solid #d5dbe3"></div>
<div class="a" style="left:37px;top:401px;width:29px;height:29px;border:1.5px solid #a3b3c5;border-radius:7px;background:#fff"></div>
<div class="t" style="left:101.0px;top:406.3px;font-size:20.3px;color:#1d3550;font-weight:400;letter-spacing:0px;">7</div>
<div class="t" style="left:165.5px;top:406.3px;font-size:20.3px;color:#1d3550;font-weight:400;letter-spacing:-0.45px;-webkit-text-stroke:0.45px currentColor;text-decoration:underline;text-decoration-thickness:1.5px;text-underline-offset:2px;">KLIC333</div>
<div class="t" style="left:440.0px;top:406.3px;font-size:20.3px;color:#1d3550;font-weight:400;letter-spacing:-0.158px;">KLIC333</div>
<div class="t" style="left:704.0px;top:406.3px;font-size:20.3px;color:#1d3550;font-weight:400;letter-spacing:-1.0px;">KLÍČE</div>
<div class="t" style="left:1082.0px;top:406.3px;font-size:20.3px;color:#1d3550;font-weight:400;letter-spacing:-0.158px;">KLIC333</div>
<div class="t" style="left:1262.5px;top:406.3px;font-size:20.3px;color:#1d3550;font-weight:400;letter-spacing:0.1px;-webkit-text-stroke:0.45px currentColor;text-decoration:underline;text-decoration-thickness:1.5px;text-underline-offset:2px;">351</div>
<div class="t" style="left:1385.0px;top:406.3px;font-size:20.3px;color:#1d3550;font-weight:400;letter-spacing:-0.25px;">internal.mailstep PRG AVAILABLE</div>
<div class="t" style="left:1812.5px;top:406.3px;font-size:20.3px;color:#1d3550;font-weight:400;letter-spacing:-0.12px;">internal.mailstep AVAILABLE</div>
<div class="a" style="left:34px;top:448px;width:2213px;height:64px;background:#f9fafc;border-bottom:1px solid #d5dbe3"></div>
<div class="a" style="left:37px;top:465px;width:29px;height:29px;border:1.5px solid #a3b3c5;border-radius:7px;background:#fff"></div>
<div class="t" style="left:101.0px;top:470.3px;font-size:20.3px;color:#1d3550;font-weight:400;letter-spacing:0px;">8</div>
<div class="t" style="left:165.5px;top:470.3px;font-size:20.3px;color:#1d3550;font-weight:400;letter-spacing:-0.45px;-webkit-text-stroke:0.45px currentColor;text-decoration:underline;text-decoration-thickness:1.5px;text-underline-offset:2px;">sarzicka</div>
<div class="t" style="left:440.0px;top:470.3px;font-size:20.3px;color:#1d3550;font-weight:400;letter-spacing:0.229px;">sarzicka</div>
<div class="t" style="left:704.0px;top:470.3px;font-size:20.3px;color:#1d3550;font-weight:400;letter-spacing:0.343px;">šaržička</div>
<div class="t" style="left:1082.0px;top:470.3px;font-size:20.3px;color:#1d3550;font-weight:400;letter-spacing:0.229px;">sarzicka</div>
<div class="t" style="left:1262.5px;top:470.3px;font-size:20.3px;color:#1d3550;font-weight:400;letter-spacing:0.1px;-webkit-text-stroke:0.45px currentColor;text-decoration:underline;text-decoration-thickness:1.5px;text-underline-offset:2px;">138</div>
<div class="t" style="left:1385.0px;top:470.3px;font-size:20.3px;color:#1d3550;font-weight:400;letter-spacing:-0.25px;">internal.mailstep PRG AVAILABLE</div>
<div class="t" style="left:1812.5px;top:470.3px;font-size:20.3px;color:#1d3550;font-weight:400;letter-spacing:-0.12px;">internal.mailstep AVAILABLE</div>
<div class="a" style="left:34px;top:512px;width:2213px;height:64px;background:#fff;border-bottom:1px solid #d5dbe3"></div>
<div class="a" style="left:37px;top:529px;width:29px;height:29px;border:1.5px solid #a3b3c5;border-radius:7px;background:#fff"></div>
<div class="t" style="left:101.0px;top:534.3px;font-size:20.3px;color:#1d3550;font-weight:400;letter-spacing:0px;">9</div>
<div class="t" style="left:165.5px;top:534.3px;font-size:20.3px;color:#1d3550;font-weight:400;letter-spacing:-0.45px;-webkit-text-stroke:0.45px currentColor;text-decoration:underline;text-decoration-thickness:1.5px;text-underline-offset:2px;">lot2</div>
<div class="t" style="left:440.0px;top:534.3px;font-size:20.3px;color:#1d3550;font-weight:400;letter-spacing:0.45px;">lot2</div>
<div class="t" style="left:704.0px;top:534.3px;font-size:20.3px;color:#1d3550;font-weight:400;letter-spacing:0.55px;">lot2</div>
<div class="t" style="left:1082.0px;top:534.3px;font-size:20.3px;color:#1d3550;font-weight:400;letter-spacing:0.45px;">lot2</div>
<div class="t" style="left:1262.5px;top:534.3px;font-size:20.3px;color:#1d3550;font-weight:400;letter-spacing:0.1px;-webkit-text-stroke:0.45px currentColor;text-decoration:underline;text-decoration-thickness:1.5px;text-underline-offset:2px;">134</div>
<div class="t" style="left:1385.0px;top:534.3px;font-size:20.3px;color:#1d3550;font-weight:400;letter-spacing:-0.25px;">internal.mailstep PRG AVAILABLE</div>
<div class="t" style="left:1812.5px;top:534.3px;font-size:20.3px;color:#1d3550;font-weight:400;letter-spacing:-0.12px;">internal.mailstep AVAILABLE</div>
<div class="a" style="left:34px;top:576px;width:2213px;height:64px;background:#f9fafc;border-bottom:1px solid #d5dbe3"></div>
<div class="a" style="left:37px;top:593px;width:29px;height:29px;border:1.5px solid #a3b3c5;border-radius:7px;background:#fff"></div>
<div class="t" style="left:101.0px;top:598.3px;font-size:20.3px;color:#1d3550;font-weight:400;letter-spacing:0px;">10</div>
<div class="t" style="left:165.5px;top:598.3px;font-size:20.3px;color:#1d3550;font-weight:400;letter-spacing:-0.45px;-webkit-text-stroke:0.45px currentColor;text-decoration:underline;text-decoration-thickness:1.5px;text-underline-offset:2px;">test-28-04-1</div>
<div class="t" style="left:440.0px;top:598.3px;font-size:20.3px;color:#1d3550;font-weight:400;letter-spacing:0.455px;">test-28-04-1</div>
<div class="t" style="left:704.0px;top:598.3px;font-size:20.3px;color:#1d3550;font-weight:400;letter-spacing:0.491px;">test-28-04-1</div>
<div class="t" style="left:1082.0px;top:598.3px;font-size:20.3px;color:#1d3550;font-weight:400;letter-spacing:0.455px;">test-28-04-1</div>
<div class="t" style="left:1262.5px;top:598.3px;font-size:20.3px;color:#1d3550;font-weight:400;letter-spacing:0.1px;-webkit-text-stroke:0.45px currentColor;text-decoration:underline;text-decoration-thickness:1.5px;text-underline-offset:2px;">123</div>
<div class="t" style="left:1385.0px;top:598.3px;font-size:20.3px;color:#1d3550;font-weight:400;letter-spacing:-0.25px;">internal.mailstep PRG AVAILABLE</div>
<div class="t" style="left:1812.5px;top:598.3px;font-size:20.3px;color:#1d3550;font-weight:400;letter-spacing:-0.12px;">internal.mailstep AVAILABLE</div>
<div class="a" style="left:34px;top:640px;width:2213px;height:64px;background:#fff;border-bottom:1px solid #d5dbe3"></div>
<div class="a" style="left:37px;top:657px;width:29px;height:29px;border:1.5px solid #a3b3c5;border-radius:7px;background:#fff"></div>
<div class="t" style="left:101.0px;top:662.3px;font-size:20.3px;color:#1d3550;font-weight:400;letter-spacing:0px;">11</div>
<div class="t" style="left:165.5px;top:662.3px;font-size:20.3px;color:#1d3550;font-weight:400;letter-spacing:-0.45px;-webkit-text-stroke:0.45px currentColor;text-decoration:underline;text-decoration-thickness:1.5px;text-underline-offset:2px;">BALTEST04</div>
<div class="t" style="left:440.0px;top:662.3px;font-size:20.3px;color:#1d3550;font-weight:400;letter-spacing:-0.512px;">BALTEST04</div>
<div class="t" style="left:704.0px;top:662.3px;font-size:20.3px;color:#1d3550;font-weight:400;letter-spacing:-0.512px;">BALTEST04</div>
<div class="t" style="left:1082.0px;top:662.3px;font-size:20.3px;color:#1d3550;font-weight:400;letter-spacing:-0.512px;">BALTEST02</div>
<div class="t" style="left:1262.5px;top:662.3px;font-size:20.3px;color:#1d3550;font-weight:400;letter-spacing:0.1px;-webkit-text-stroke:0.45px currentColor;text-decoration:underline;text-decoration-thickness:1.5px;text-underline-offset:2px;">170</div>
<div class="t" style="left:1385.0px;top:662.3px;font-size:20.3px;color:#1d3550;font-weight:400;letter-spacing:-0.25px;">internal.mailstep PRG AVAILABLE</div>
<div class="t" style="left:1812.5px;top:662.3px;font-size:20.3px;color:#1d3550;font-weight:400;letter-spacing:-0.12px;">internal.mailstep AVAILABLE</div>
<div class="a" style="left:34px;top:704px;width:2213px;height:64px;background:#f9fafc;border-bottom:1px solid #d5dbe3"></div>
<div class="a" style="left:37px;top:721px;width:29px;height:29px;border:1.5px solid #a3b3c5;border-radius:7px;background:#fff"></div>
<div class="t" style="left:101.0px;top:726.3px;font-size:20.3px;color:#1d3550;font-weight:400;letter-spacing:0px;">12</div>
<div class="t" style="left:165.5px;top:726.3px;font-size:20.3px;color:#1d3550;font-weight:400;letter-spacing:-0.45px;-webkit-text-stroke:0.45px currentColor;text-decoration:underline;text-decoration-thickness:1.5px;text-underline-offset:2px;">ab1234cd</div>
<div class="t" style="left:440.0px;top:726.3px;font-size:20.3px;color:#1d3550;font-weight:400;letter-spacing:-0.036px;">ab1234cd</div>
<div class="t" style="left:704.0px;top:726.3px;font-size:20.3px;color:#1d3550;font-weight:400;letter-spacing:0.021px;">Test prod 240607 0619 - TEO_MAIN</div>
<div class="t" style="left:1082.0px;top:726.3px;font-size:20.3px;color:#1d3550;font-weight:400;letter-spacing:-0.036px;">ab1234cd</div>
<div class="t" style="left:1262.5px;top:726.3px;font-size:20.3px;color:#1d3550;font-weight:400;letter-spacing:0.1px;-webkit-text-stroke:0.45px currentColor;text-decoration:underline;text-decoration-thickness:1.5px;text-underline-offset:2px;">146</div>
<div class="t" style="left:1385.0px;top:726.3px;font-size:20.3px;color:#1d3550;font-weight:400;letter-spacing:-0.25px;">internal.mailstep PRG AVAILABLE</div>
<div class="t" style="left:1812.5px;top:726.3px;font-size:20.3px;color:#1d3550;font-weight:400;letter-spacing:-0.12px;">internal.mailstep AVAILABLE</div>
</div>
<div class="a" style="left:454px;top:1212px;width:1408px;height:30px;border-radius:9px;background:#b8bfc9"></div>
<div class="a" style="left:2691px;top:356px;width:27px;height:819px;border-radius:10px;background:#b8bfc9"></div>
<svg style="left:0;top:0" width="2732" height="1394"><path d="M2067.4 1299.2 H2070.9 V1315.9 H2067.4 V1303.2 L2063.8 1305.6 V1302.2749999999999 L2068.0 1299.2 Z" fill="#da291c"/></svg>
<div class="t" style="left:2103.0px;top:1296.9px;font-size:23px;color:#7189a0;font-weight:400;letter-spacing:0px;-webkit-text-stroke:0.35px currentColor;">2</div>
<div class="t" style="left:2144.5px;top:1296.9px;font-size:23px;color:#7189a0;font-weight:400;letter-spacing:0px;-webkit-text-stroke:0.35px currentColor;">3</div>
<div class="t" style="left:2185.5px;top:1296.9px;font-size:23px;color:#7189a0;font-weight:400;letter-spacing:0px;-webkit-text-stroke:0.35px currentColor;">4</div>
<div class="t" style="left:2227.0px;top:1296.9px;font-size:23px;color:#7189a0;font-weight:400;letter-spacing:0px;-webkit-text-stroke:0.35px currentColor;">5</div>
<div class="t" style="left:2255.0px;top:1296.9px;font-size:23px;color:#7189a0;font-weight:400;letter-spacing:0px;-webkit-text-stroke:0.35px currentColor;">...</div>
<svg style="left:0;top:0" width="2732" height="1394"><path d="M2297 1299.2 H2299.2 V1315.9 H2297 V1303.2 L2293.4 1305.6 V1303.51 L2297.6 1299.2 Z" fill="#7189a0"/></svg>
<svg style="left:0;top:0" width="2732" height="1394"><path d="M2306 1299.2 H2308.2 V1315.9 H2306 V1303.2 L2302.4 1305.6 V1303.51 L2306.6 1299.2 Z" fill="#7189a0"/></svg>
<svg style="left:2352px;top:1299px" width="12" height="19" viewBox="0 0 12 19"><path d="M1.8 1.8 L10 9.5 L1.8 17.2" fill="none" stroke="#1d3550" stroke-width="2.4" stroke-linecap="round" stroke-linejoin="round"/></svg>
<div class="a" style="left:2392px;top:1278px;width:128px;height:60px;border:1px solid #d1d7df;border-radius:14px;background:#fff"></div>
<div class="t" style="left:2409.0px;top:1298.3px;font-size:23px;color:#1d3550;font-weight:400;letter-spacing:-0.5px;">12</div>
<svg style="left:2480px;top:1301px" width="20" height="13" viewBox="0 0 20 13"><path d="M1.8 1.8 L10 10.5 L18.2 1.8" fill="none" stroke="#1d3550" stroke-width="3" stroke-linecap="round" stroke-linejoin="round"/></svg>
<div class="t" style="left:2533.5px;top:1296.8px;font-size:21px;color:#111;font-weight:400;letter-spacing:-0.4px;">Results per page</div>
</body></html>
